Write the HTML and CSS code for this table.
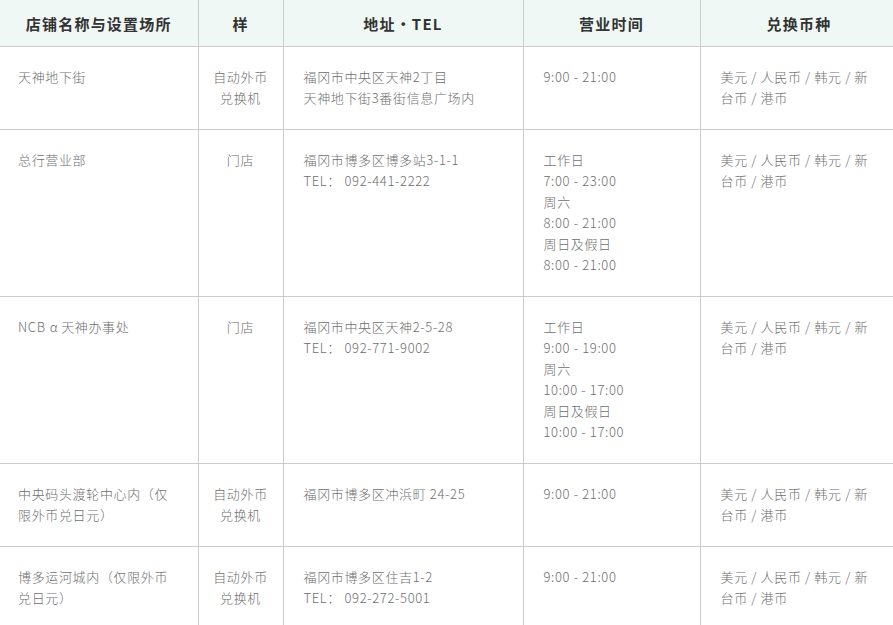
FILE: index.html
```html
<!DOCTYPE html>
<html lang="zh-CN">
<head>
<meta charset="utf-8">
<link rel="stylesheet" href="styles.css">
</head>
<body>
<table class="shops">
  <colgroup>
    <col class="c1"><col class="c2"><col class="c3"><col class="c4"><col class="c5">
  </colgroup>
  <thead>
    <tr>
      <th>店铺名称与设置场所</th>
      <th>样</th>
      <th>地址・TEL</th>
      <th>营业时间</th>
      <th>兑换币种</th>
    </tr>
  </thead>
  <tbody>
    <tr>
      <td>天神地下街</td>
      <td class="center">自动外币<br>兑换机</td>
      <td>福冈市中央区天神2丁目<br>天神地下街3番街信息广场内</td>
      <td>9:00 - 21:00</td>
      <td>美元 / 人民币 / 韩元 / 新台币 / 港币</td>
    </tr>
    <tr>
      <td>总行营业部</td>
      <td class="center">门店</td>
      <td>福冈市博多区博多站3-1-1<br>TEL： 092-441-2222</td>
      <td>工作日<br>7:00 - 23:00<br>周六<br>8:00 - 21:00<br>周日及假日<br>8:00 - 21:00</td>
      <td>美元 / 人民币 / 韩元 / 新台币 / 港币</td>
    </tr>
    <tr>
      <td>NCB<span class="alpha">α</span>天神办事处</td>
      <td class="center">门店</td>
      <td>福冈市中央区天神2-5-28<br>TEL： 092-771-9002</td>
      <td>工作日<br>9:00 - 19:00<br>周六<br>10:00 - 17:00<br>周日及假日<br>10:00 - 17:00</td>
      <td>美元 / 人民币 / 韩元 / 新台币 / 港币</td>
    </tr>
    <tr>
      <td>中央码头渡轮中心内（仅限外币兑日元）</td>
      <td class="center">自动外币<br>兑换机</td>
      <td>福冈市博多区冲浜町 24-25</td>
      <td>9:00 - 21:00</td>
      <td>美元 / 人民币 / 韩元 / 新台币 / 港币</td>
    </tr>
    <tr>
      <td>博多运河城内（仅限外币兑日元）</td>
      <td class="center">自动外币<br>兑换机</td>
      <td>福冈市博多区住吉1-2<br>TEL： 092-272-5001</td>
      <td>9:00 - 21:00</td>
      <td>美元 / 人民币 / 韩元 / 新台币 / 港币</td>
    </tr>
  </tbody>
</table>
</body>
</html>
```

FILE: styles.css
```css
html, body {
  margin: 0;
  padding: 0;
  background: #ffffff;
}

body {
  font-family: "Noto Sans CJK SC", "Noto Sans", sans-serif;
  overflow: hidden;
}

.shops {
  border-collapse: collapse;
  table-layout: fixed;
  width: 898px;
  font-size: 13px;
  font-weight: 300;
  line-height: 21px;
  color: #6e6e6e;
  letter-spacing: 0.05em;
}

.c1 { width: 198px; }
.c2 { width: 85px; }
.c3 { width: 240px; }
.c4 { width: 177px; }
.c5 { width: 198px; }

.shops th {
  background: #f0f8f5;
  color: #333333;
  font-size: 15px;
  font-weight: bold;
  height: 46px;
  padding: 0 10px;
  border: 1px solid #cccccc;
  border-top: none;
  text-align: center;
  vertical-align: middle;
  letter-spacing: 0.08em;
}

.shops td {
  padding: 19px 20px 21px 18px;
  border: 1px solid #cccccc;
  vertical-align: top;
  text-align: left;
}

.shops td:nth-child(3),
.shops td:nth-child(4),
.shops td:nth-child(5) {
  padding-left: 20px;
}

.shops th:first-child,
.shops td:first-child {
  border-left: none;
}

.shops td.center {
  text-align: center;
  padding-left: 10px;
  padding-right: 10px;
}

.alpha {
  margin: 0 3px 0 4px;
}
```
